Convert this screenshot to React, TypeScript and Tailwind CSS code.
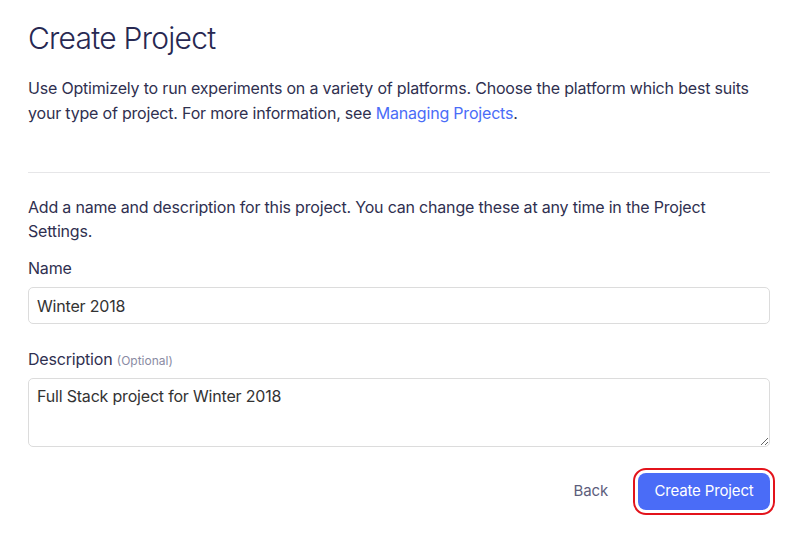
import React from 'react';

const App: React.FC = () => {
    return (
        <div className="min-h-[543px] w-full bg-white pl-[28px] pr-[31px] pt-5 text-[#2f3050]" style={{ fontFamily: 'Inter, "Noto Sans", sans-serif' }}>
            <h1 className="text-[30px] font-light leading-[36px] tracking-[-0.025em] text-[#272852]">Create Project</h1>
            <p className="mt-5 text-[16px] leading-[25px] tracking-[-0.012em]">
                Use Optimizely to run experiments on a variety of platforms. Choose the platform which best suits your type of project. For more information, see{' '}
                <a href="#" className="text-[#4a6cf7]">Managing Projects</a>.
            </p>
            <div className="mt-[46px] h-px bg-[#e6e6e8]" />
            <p className="mt-[22px] text-[16px] leading-[24px] tracking-[-0.012em]">
                Add a name and description for this project. You can change these at any time in the Project Settings.
            </p>
            <label className="mt-[13px] block text-[16px] leading-[24px] tracking-[-0.012em]">Name</label>
            <input
                type="text"
                defaultValue="Winter 2018"
                className="mt-[7px] block h-[37px] w-full rounded-[5px] border border-[#dcdcdc] px-2 text-[16px] tracking-[-0.012em] text-[#333] outline-none"
            />
            <label className="mt-[23px] block text-[16px] leading-[24px] tracking-[-0.012em]">
                Description <span className="text-[12px] tracking-normal text-[#8a8ba3]">(Optional)</span>
            </label>
            <textarea
                defaultValue="Full Stack project for Winter 2018"
                className="mt-[5px] block h-[69px] w-full rounded-[5px] border border-[#dcdcdc] px-2 py-[7px] text-[16px] leading-[20px] tracking-[-0.012em] text-[#333] outline-none"
            />
            <div className="mt-[26px] flex items-center justify-end">
                <button className="mr-[30px] text-[15px] tracking-[-0.01em] text-[#5d5e7c]">Back</button>
                <button className="h-[37px] w-[132px] rounded-lg bg-[#4a6cf7] text-[15px] tracking-[-0.01em] text-white outline-2 outline-offset-[3px] outline-[#e3131b]">
                    Create Project
                </button>
            </div>
        </div>
    );
};

export default App;
